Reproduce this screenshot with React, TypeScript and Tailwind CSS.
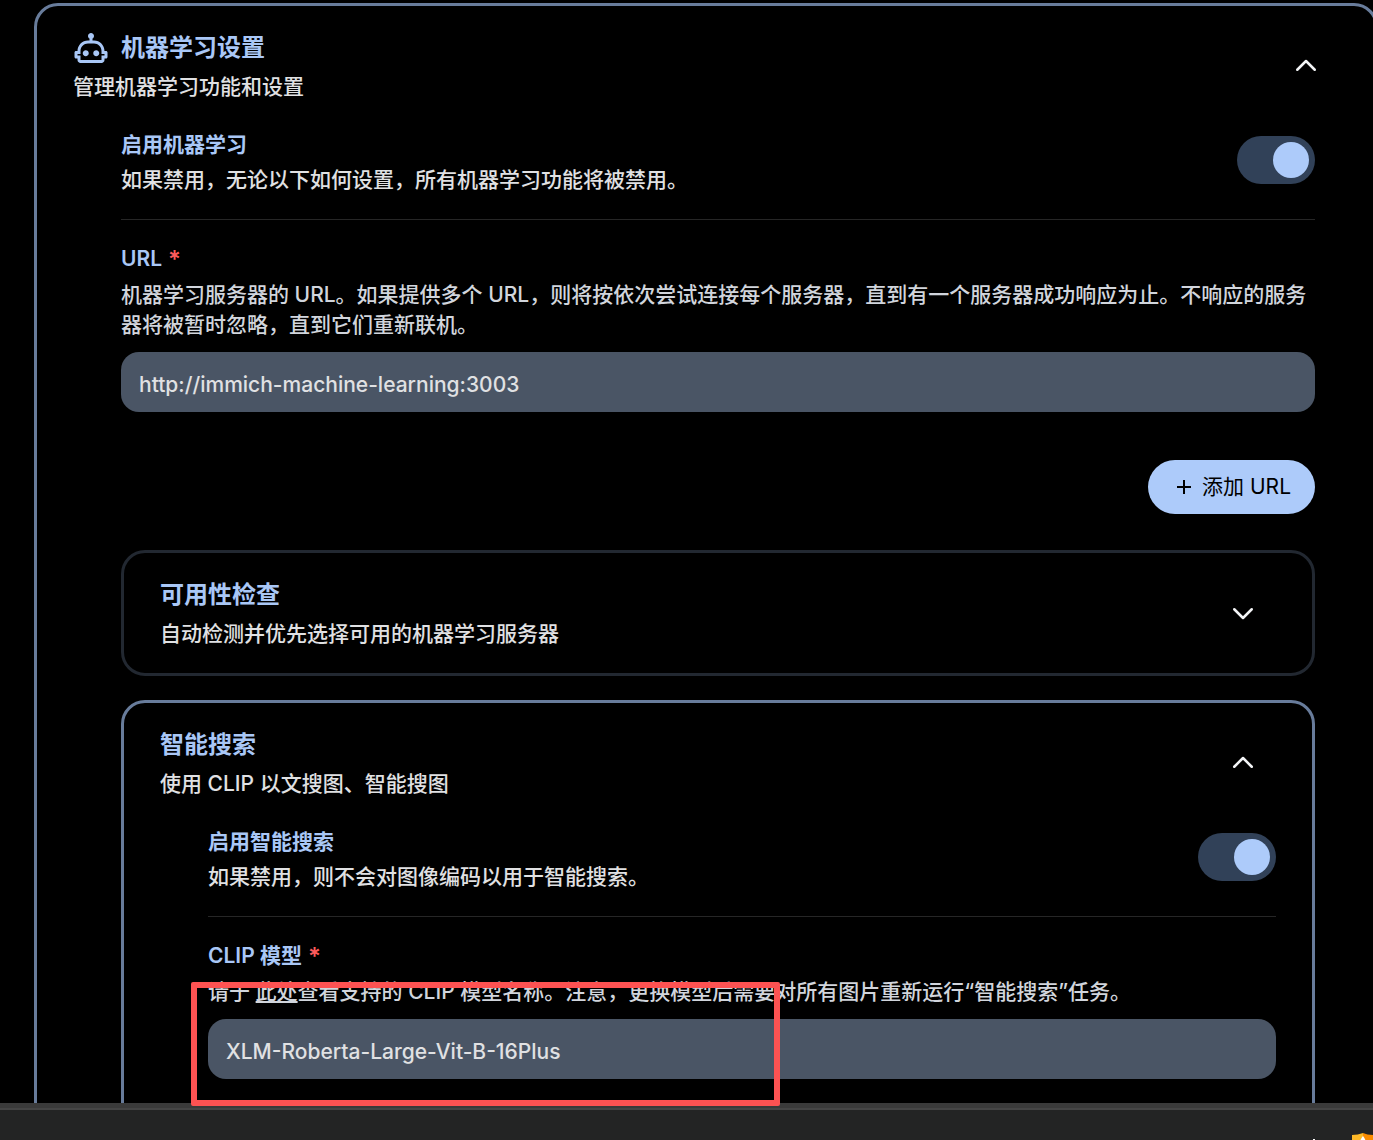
import { useId, useState, type ReactNode } from "react";

function RobotIcon() {
  return (
    <svg viewBox="0 0 24 24" className="size-9 shrink-0" fill="currentColor" aria-hidden="true">
      <path d="M17.5 15.5C17.5 16.61 16.61 17.5 15.5 17.5S13.5 16.61 13.5 15.5 14.4 13.5 15.5 13.5 17.5 14.4 17.5 15.5M8.5 13.5C7.4 13.5 6.5 14.4 6.5 15.5S7.4 17.5 8.5 17.5 10.5 16.61 10.5 15.5 9.61 13.5 8.5 13.5M23 15V18C23 18.55 22.55 19 22 19H21V20C21 21.11 20.11 22 19 22H5C3.9 22 3 21.11 3 20V19H2C1.45 19 1 18.55 1 18V15C1 14.45 1.45 14 2 14H3C3 10.13 6.13 7 10 7H11V5.73C10.4 5.39 10 4.74 10 4C10 2.9 10.9 2 12 2S14 2.9 14 4C14 4.74 13.6 5.39 13 5.73V7H14C17.87 7 21 10.13 21 14H22C22.55 14 23 14.45 23 15M21 16H19V14C19 11.24 16.76 9 14 9H10C7.24 9 5 11.24 5 14V16H3V17H5V20H19V17H21V16Z" />
    </svg>
  );
}

function Chevron({ up }: { up: boolean }) {
  return (
    <svg
      viewBox="0 0 24 24"
      className="size-[30px]"
      fill="none"
      stroke="currentColor"
      strokeWidth="2"
      strokeLinecap="round"
      strokeLinejoin="round"
      aria-hidden="true"
    >
      <path d={up ? "M5 15l7-7 7 7" : "M19 9l-7 7-7-7"} />
    </svg>
  );
}

function Accordion({
  title,
  subtitle,
  icon,
  defaultOpen = false,
  bodyClass = "",
  children,
}: {
  title: string;
  subtitle: string;
  icon?: ReactNode;
  defaultOpen?: boolean;
  bodyClass?: string;
  children?: ReactNode;
}) {
  const [open, setOpen] = useState(defaultOpen);
  return (
    <section className={`rounded-3xl border-3 ${open ? "border-[#687c9b]" : "border-[#222831]"}`}>
      <button
        type="button"
        aria-expanded={open}
        onClick={() => setOpen(!open)}
        className="flex w-full items-center justify-between py-6 pr-[54px] pl-9 text-left"
      >
        <span className="flex flex-col gap-1.5">
          <span className="flex items-center gap-3 text-2xl leading-9 font-semibold text-[#a9c7f6]">
            {icon}
            {title}
          </span>
          <span className="text-[21px] leading-[30px] font-medium text-[#e0e1e3]">{subtitle}</span>
        </span>
        <span className="text-[#f3f4f6]">
          <Chevron up={open} />
        </span>
      </button>
      {open && children && <div className={`pl-21 ${bodyClass}`}>{children}</div>}
    </section>
  );
}

function SwitchRow({ title, description }: { title: string; description: string }) {
  const id = useId();
  return (
    <div className="flex items-start justify-between border-b border-[#262626] pt-1 pb-6">
      <div className="flex flex-col gap-[5px] text-[21px] leading-[30px] font-medium">
        <label htmlFor={id} className="font-semibold text-[#a9c7f6]">
          {title}
        </label>
        <p className="text-[#e0e1e3]">{description}</p>
      </div>
      <input
        id={id}
        type="checkbox"
        role="switch"
        defaultChecked
        className="mt-1.5 flex h-12 w-[78px] shrink-0 appearance-none items-center rounded-full bg-gray-600 p-1.5 before:size-9 before:rounded-full before:bg-gray-300 checked:justify-end checked:bg-[#314158] checked:before:bg-[#adcbfa]"
      />
    </div>
  );
}

function Field({ label, value, description }: { label: string; value: string; description: ReactNode }) {
  const id = useId();
  return (
    <div className="flex flex-col pt-6 text-[21px] leading-[30px] font-medium">
      <label htmlFor={id} className="mb-1.5 flex gap-1.5 font-semibold text-[#a9c7f6]">
        {label}
        <span className="pt-0.5 text-2xl leading-7 text-[#fb5b5b]">*</span>
      </label>
      <p className="mb-3 text-[#d1d5dc]">{description}</p>
      <input
        id={id}
        type="text"
        required
        defaultValue={value}
        className="h-15 w-full rounded-[18px] bg-[#4a5565] px-[18px] pt-1 text-[#e0e1e3] outline-none"
      />
    </div>
  );
}

function ShieldIcon() {
  return (
    <svg viewBox="0 0 24 24" className="size-6" aria-hidden="true">
      <path d="M1 2Q7 2 12 0V24Q1 20 1 12Z" fill="#fdb827" />
      <path d="M12 0Q16 2 22 2V12Q22 20 12 24Z" fill="#fb8c00" />
      <path d="M12 3Q16 8 15 13H8Q8 8 12 3Z" fill="#fff" />
    </svg>
  );
}

export default function App() {
  return (
    <div className='relative flex h-screen flex-col overflow-hidden bg-black font-["Inter","Noto_Sans_CJK_SC",sans-serif]'>
      <main className="-mr-[5px] min-h-0 flex-1 overflow-hidden pt-[3px] pl-[34px]">
        <Accordion
          title="机器学习设置"
          subtitle="管理机器学习功能和设置"
          icon={<RobotIcon />}
          defaultOpen
          bodyClass="pr-15"
        >
          <SwitchRow title="启用机器学习" description="如果禁用，无论以下如何设置，所有机器学习功能将被禁用。" />
          <Field
            label="URL"
            value="http://immich-machine-learning:3003"
            description="机器学习服务器的 URL。如果提供多个 URL，则将按依次尝试连接每个服务器，直到有一个服务器成功响应为止。不响应的服务器将被暂时忽略，直到它们重新联机。"
          />
          <div className="flex justify-end pt-12 pb-9">
            <button
              type="button"
              className="flex h-[54px] items-center gap-1.5 rounded-full bg-[#adcbfa] px-6 text-[21px] leading-[30px] text-black"
            >
              <svg viewBox="0 0 24 24" className="size-6" fill="currentColor" aria-hidden="true">
                <path d="M19 13H13V19H11V13H5V11H11V5H13V11H19V13Z" />
              </svg>
              添加 URL
            </button>
          </div>
          <div className="flex flex-col gap-6">
            <Accordion title="可用性检查" subtitle="自动检测并优先选择可用的机器学习服务器" />
            <Accordion title="智能搜索" subtitle="使用 CLIP 以文搜图、智能搜图" defaultOpen bodyClass="pr-9 pb-15">
              <SwitchRow title="启用智能搜索" description="如果禁用，则不会对图像编码以用于智能搜索。" />
              <Field
                label="CLIP 模型"
                value="XLM-Roberta-Large-Vit-B-16Plus"
                description={
                  <>
                    请于{" "}
                    <a href="#models" className="underline">
                      此处
                    </a>
                    查看支持的 CLIP 模型名称。注意，更换模型后需要对所有图片重新运行“智能搜索”任务。
                  </>
                }
              />
            </Accordion>
          </div>
        </Accordion>
      </main>

      <footer className="flex h-[37px] shrink-0 flex-col bg-[#232424]">
        <div className="h-[7px] shrink-0 border-b-2 border-[#454545] bg-[#3a3a3a]" />
        <div className="flex h-[30px] justify-end gap-9 overflow-hidden">
          <div className="h-px w-0.5 self-end bg-white" />
          <div className="-mr-0.5 pt-[23px]">
            <ShieldIcon />
          </div>
        </div>
      </footer>

      {/* Highlight frame around the model name field */}
      <div className="pointer-events-none absolute bottom-[34px] left-[191px] h-[124px] w-[589px] rounded-xs border-6 border-[#fd5252]" />
    </div>
  );
}
